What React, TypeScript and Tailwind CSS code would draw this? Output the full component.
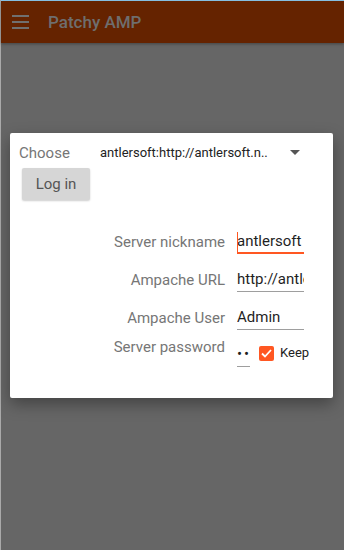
import React from 'react'

const font = { fontFamily: 'Roboto, "Noto Sans", sans-serif' }

function Row({ label, children, top }: { label: string; children: React.ReactNode; top?: boolean }) {
  return (
    <div className={`flex ${top ? 'items-start' : 'items-center'}`}>
      <div className="w-[227px] text-right text-[15px] text-[#767676] leading-[20px] pr-[12px]">{label}</div>
      <div className="flex-1">{children}</div>
    </div>
  )
}

export default function App() {
  return (
    <div className="w-[344px] h-[550px] bg-[#666666] border-l border-[#aaaaaa] flex flex-col relative" style={font}>
      <div className="h-px bg-[#8ecbf0]" />
      <header className="h-[42px] bg-[#652300] flex items-center shadow-[0_1px_3px_rgba(0,0,0,0.35)] z-10">
        <div className="ml-[11px] w-[17px] flex flex-col gap-[4px]">
          <span className="h-[2px] bg-[#707070] block" />
          <span className="h-[2px] bg-[#707070] block" />
          <span className="h-[2px] bg-[#707070] block" />
        </div>
        <div className="ml-[19px] text-[17px] font-medium text-[#6e6e6e] leading-none">Patchy AMP</div>
      </header>
      <div className="pt-[90px] px-[9px]">
        <div className="bg-white w-[323px] h-[265px] rounded-[2px] shadow-[0_6px_16px_rgba(0,0,0,0.35)] pt-[10px]">
          <div className="flex items-center h-[20px]">
            <div className="ml-[9px] w-[81px] text-[15px] text-[#767676]">Choose</div>
            <div className="text-[13px] text-[#222222] w-[190px] whitespace-nowrap">antlersoft:http://antlersoft.n..</div>
            <svg width="10" height="6" viewBox="0 0 10 6">
              <path d="M0 0 L10 0 L5 5 Z" fill="#555555" />
            </svg>
          </div>
          <div className="ml-[12px] mt-[5px] w-[68px] h-[32px] bg-[#d6d6d6] rounded-[2px] shadow-[0_1px_2px_rgba(0,0,0,0.2)] flex items-center justify-center text-[15px] text-[#555555]">
            Log in
          </div>
          <div className="mt-[30px] flex flex-col">
            <Row label="Server nickname">
              <div className="w-[67px] h-[24px] border-b-2 border-[#ff5722] relative text-[15px] text-[#1f1f1f] leading-[22px] overflow-hidden whitespace-nowrap">
                <span className="absolute left-0 top-[2px] w-px h-[20px] bg-[#ff5722]" />
                antlersoft
              </div>
            </Row>
            <div className="h-[14px]" />
            <Row label="Ampache URL">
              <div className="w-[67px] h-[24px] border-b border-[#9e9e9e] text-[15px] text-[#1f1f1f] leading-[22px] overflow-hidden whitespace-nowrap">
                http://antlersoft.net
              </div>
            </Row>
            <div className="h-[14px]" />
            <Row label="Ampache User">
              <div className="w-[67px] h-[24px] border-b border-[#9e9e9e] text-[15px] text-[#1f1f1f] leading-[22px] overflow-hidden whitespace-nowrap">
                Admin
              </div>
            </Row>
            <div className="h-[7px]" />
            <Row label="Server password" top>
              <div className="flex items-center mt-[2px]">
                <div className="w-[13px] h-[24px] border-b border-[#9e9e9e] text-[15px] text-[#1f1f1f] leading-[22px] overflow-hidden whitespace-nowrap mt-[4px] tracking-[2px]">
                  ••••
                </div>
                <div className="ml-[9px] w-[15px] h-[15px] bg-[#ff5722] rounded-[2px] flex items-center justify-center">
                  <svg width="11" height="9" viewBox="0 0 11 9">
                    <path d="M1 4.5 L4 7.5 L10 1" stroke="white" strokeWidth="1.8" fill="none" />
                  </svg>
                </div>
                <div className="ml-[6px] text-[13px] text-[#222222]">Keep</div>
              </div>
            </Row>
          </div>
        </div>
      </div>
    </div>
  )
}
